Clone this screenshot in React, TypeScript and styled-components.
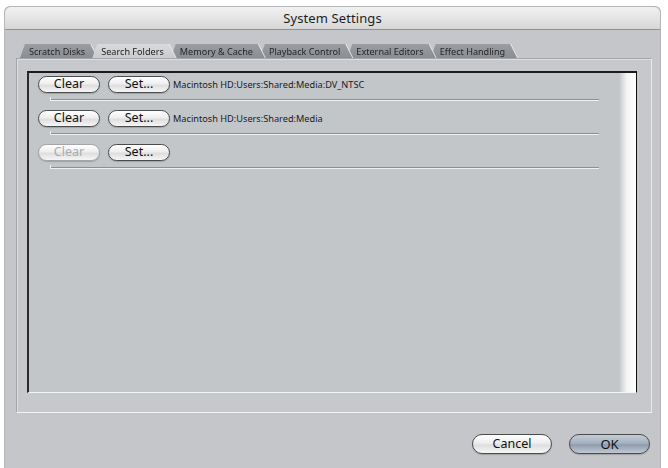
import { ReactElement } from 'react';
import styled, { createGlobalStyle } from 'styled-components';

const GlobalStyle = createGlobalStyle`
  html, body {
    margin: 0;
    padding: 0;
    background: #ffffff;
  }
  body {
    font-family: 'Noto Sans', 'DejaVu Sans', sans-serif;
  }
`;

const Page = styled.div`
  width: 668px;
  height: 468px;
  padding: 6px 7px 0 4px;
  box-sizing: border-box;
  overflow: hidden;
`;

const Window = styled.div`
  height: 462px;
  background: #c4c6c9;
  border-radius: 6px 6px 0 0;
  border: 1px solid #b4b6b8;
  border-bottom: none;
  box-sizing: border-box;
  display: flex;
  flex-direction: column;
`;

const TitleBar = styled.div`
  height: 22px;
  flex: none;
  border-radius: 6px 6px 0 0;
  background: linear-gradient(#f1f1f1, #e2e2e2 60%, #d6d6d6);
  border-bottom: 1px solid #8f9194;
  display: flex;
  align-items: center;
  justify-content: center;
  font-size: 13px;
  color: #1e1e1e;
  letter-spacing: 0.1px;
`;

const Body = styled.div`
  flex: 1;
  display: flex;
  flex-direction: column;
  padding: 14px 8px 0 11px;
`;

const TabStrip = styled.div`
  display: flex;
  padding-left: 4px;
  height: 14px;
`;

const TabShape = styled.div<{ $z: number }>`
  position: relative;
  z-index: ${({ $z }) => $z};
  margin-right: -5px;
  filter: drop-shadow(1px 0 0 rgba(240, 240, 240, 0.85));
`;

const Tab = styled.div<{ $active?: boolean }>`
  height: 14px;
  padding: 1px 12px 0 9px;
  box-sizing: border-box;
  display: flex;
  align-items: center;
  font-size: 9.1px;
  white-space: nowrap;
  color: ${({ $active }) => ($active ? '#1c1c1c' : '#262728')};
  background: ${({ $active }) =>
    $active
      ? 'linear-gradient(#d8dadc, #c9cbce)'
      : 'linear-gradient(#9a9da2, #8a8d92)'};
  clip-path: polygon(5px 0, calc(100% - 7px) 0, 100% 100%, 0 100%);
`;

const Panel = styled.div`
  height: 355px;
  box-sizing: border-box;
  border: 1px solid #a3a5a8;
  border-bottom-color: #f2f2f2;
  border-right-color: #eaeaea;
  box-shadow: inset 1px 1px 0 #dcdee0;
  background: #c6c8cb;
  padding: 12px 14px 19px 10px;
  display: flex;
`;

const List = styled.div`
  flex: 1;
  display: flex;
  border-top: 2px solid #1b1b1b;
  border-left: 2px solid #2a2a2a;
  border-right: 1px solid #111;
  border-bottom: 1px solid #f4f4f4;
  background: #c3c6c9;
`;

const Rows = styled.div`
  flex: 1;
  padding: 3px 0 0 9px;
  display: flex;
  flex-direction: column;
`;

const Scroller = styled.div`
  width: 17px;
  background: linear-gradient(to right, #c3c6c9, #f4f4f4 45%, #ffffff);
`;

const Row = styled.div`
  height: 34px;
  display: flex;
  flex-direction: column;
`;

const RowControls = styled.div`
  display: flex;
  align-items: center;
  gap: 8px;
  height: 17px;
`;

const Divider = styled.div`
  position: relative;
  margin: 6px 20px 0 12px;
  height: 1px;
  background: #8c8f93;
  box-shadow: 0 1px 0 #eef0f2;
  &::before {
    content: '';
    position: absolute;
    left: 0;
    top: -2px;
    width: 1px;
    height: 4px;
    background: #eef0f2;
  }
`;

const Pill = styled.button<{ $w: number; $default?: boolean }>`
  width: ${({ $w }) => $w}px;
  height: 100%;
  padding: 0;
  margin: 0;
  border-radius: 10px;
  border: 1px solid ${({ disabled }) => (disabled ? '#a2a4a7' : '#4a4b4d')};
  background: ${({ $default }) =>
    $default
      ? 'linear-gradient(#c3ccd6, #a6b1be 45%, #909dad 55%, #c0c9d4)'
      : 'linear-gradient(#ffffff, #eeeeee 45%, #dedede 55%, #f6f6f6)'};
  box-shadow: 0 1px 1px rgba(0, 0, 0, 0.18);
  font-family: 'Noto Sans', 'DejaVu Sans', sans-serif;
  font-size: ${({ $default }) => ($default ? 13 : 12.5)}px;
  line-height: 1;
  color: ${({ disabled }) => (disabled ? '#a9abae' : '#111')};
  display: flex;
  align-items: center;
  justify-content: center;
  cursor: default;
`;

const PathText = styled.span`
  font-size: 9.2px;
  color: #1a1a1a;
  margin-left: -5px;
  white-space: nowrap;
`;

const Footer = styled.div`
  display: flex;
  justify-content: flex-end;
  gap: 17px;
  padding: 21px 2px 0 0;
  height: 20px;
`;

type FolderRow = { path?: string; canClear: boolean };

const rows: FolderRow[] = [
  { path: 'Macintosh HD:Users:Shared:Media:DV_NTSC', canClear: true },
  { path: 'Macintosh HD:Users:Shared:Media', canClear: true },
  { canClear: false },
];

const tabs = [
  'Scratch Disks',
  'Search Folders',
  'Memory & Cache',
  'Playback Control',
  'External Editors',
  'Effect Handling',
];

export default function App(): ReactElement {
  return (
    <Page>
      <GlobalStyle />
      <Window>
        <TitleBar>System Settings</TitleBar>
        <Body>
          <TabStrip>
            {tabs.map((t, i) => (
              <TabShape key={t} $z={i === 1 ? 20 : 10 - i}>
                <Tab $active={i === 1}>{t}</Tab>
              </TabShape>
            ))}
          </TabStrip>
          <Panel>
            <List>
              <Rows>
                {rows.map((r, i) => (
                  <Row key={i}>
                    <RowControls>
                      <Pill $w={62} disabled={!r.canClear}>
                        Clear
                      </Pill>
                      <Pill $w={62}>Set...</Pill>
                      {r.path && <PathText>{r.path}</PathText>}
                    </RowControls>
                    <Divider />
                  </Row>
                ))}
              </Rows>
              <Scroller />
            </List>
          </Panel>
          <Footer>
            <Pill $w={80}>Cancel</Pill>
            <Pill $w={81} $default>
              OK
            </Pill>
          </Footer>
        </Body>
      </Window>
    </Page>
  );
}
